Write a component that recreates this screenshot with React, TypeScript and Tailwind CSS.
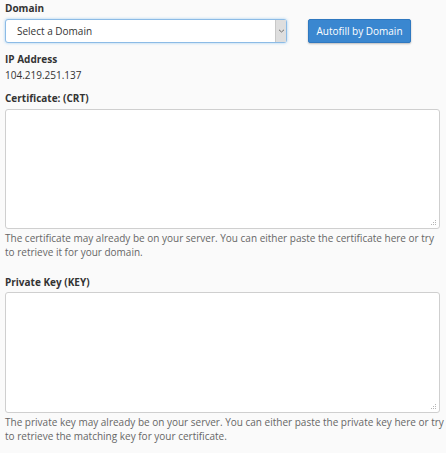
import React from "react";

function Grip() {
  // dotted resize grip in the bottom right corner of a textarea
  return (
    <svg
      className="absolute right-[3px] bottom-[3px]"
      width="6"
      height="6"
      viewBox="0 0 6 6"
    >
      <rect x="4" y="0" width="1" height="1" fill="#b5b5b5" />
      <rect x="2" y="2" width="1" height="1" fill="#b5b5b5" />
      <rect x="4" y="2" width="1" height="1" fill="#b5b5b5" />
      <rect x="0" y="4" width="1" height="1" fill="#b5b5b5" />
      <rect x="2" y="4" width="1" height="1" fill="#b5b5b5" />
      <rect x="4" y="4" width="1" height="1" fill="#b5b5b5" />
    </svg>
  );
}

function TextBox({ height }: { height: string }) {
  return (
    <div className={`relative w-[435px] ${height}`}>
      <textarea className="block w-full h-full resize-none rounded-[3px] border border-[#cfcfcf] bg-white outline-none" />
      <Grip />
    </div>
  );
}

export default function App() {
  return (
    <div className="min-h-screen bg-[#fafafa] pl-[5px] pr-[1px] font-['Open_Sans',sans-serif] text-[10px] text-[#333]">
      <div className="font-bold leading-[17px]">Domain</div>

      <div className="mt-[2px] flex items-center gap-[21px]">
        <div className="flex h-[24px] w-[282px] items-stretch rounded-[3px] border border-[#8cbbe6] bg-white shadow-[0_0_3px_rgba(102,175,233,0.6)]">
          <div className="flex flex-1 items-center pl-[11px]">Select a Domain</div>
          <div className="flex w-[11px] items-center justify-center border-l border-[#c8c8c8] bg-[#dedede]">
            <svg width="7" height="4" viewBox="0 0 7 4">
              <path d="M1 0.8 L3.5 3 L6 0.8" fill="none" stroke="#707070" strokeWidth="1" />
            </svg>
          </div>
        </div>
        <button className="h-[24px] w-[103px] rounded-[2px] border border-[#2f78c0] bg-[#3a87d0] text-[10px] text-white shadow-[0_1px_2px_rgba(0,0,0,0.25)]">
          Autofill by Domain
        </button>
      </div>

      <div className="mt-[8px] font-bold leading-[16px]">IP Address</div>
      <div className="leading-[16px]">104.219.251.137</div>

      <div className="mt-[7px] mb-[3px] font-bold leading-[16px]">Certificate: (CRT)</div>
      <TextBox height="h-[120px]" />
      <p className="mt-[3px] leading-[13.5px] text-[#666]">
        The certificate may already be on your server. You can either paste the certificate here or try to retrieve it for your domain.
      </p>

      <div className="mt-[15px] mb-[2px] font-bold leading-[16px]">Private Key (KEY)</div>
      <TextBox height="h-[121px]" />
      <p className="mt-[3px] leading-[13.5px] text-[#666]">
        The private key may already be on your server. You can either paste the private key here or try to retrieve the matching key for your certificate.
      </p>
    </div>
  );
}
